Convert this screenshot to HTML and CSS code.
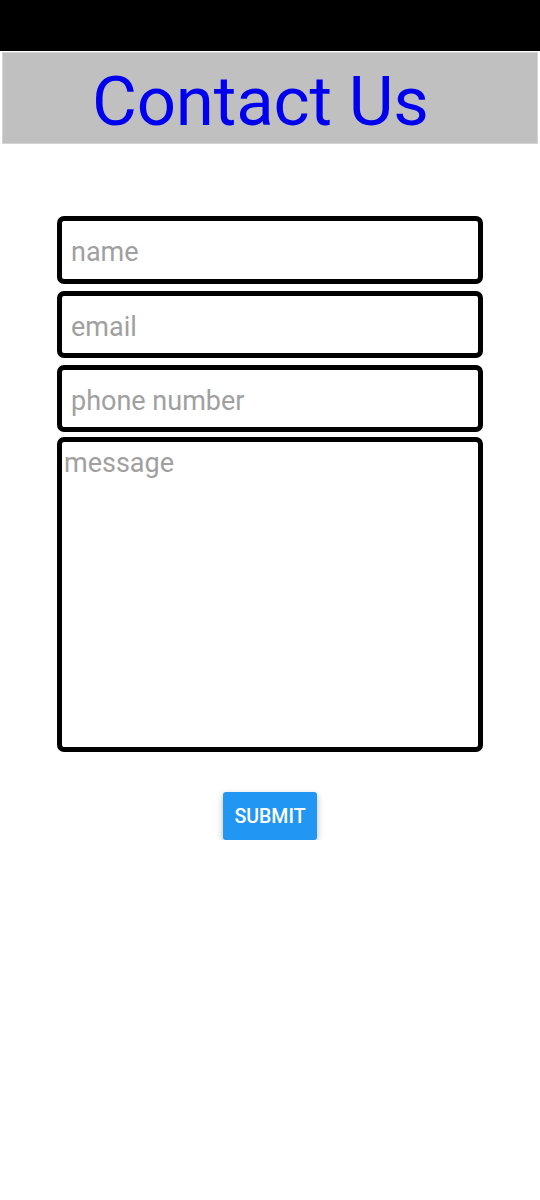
FILE: index.html
```html
<!DOCTYPE html>
<html>
<head>
<meta charset="utf-8">
<link rel="stylesheet" href="styles.css">
</head>
<body>
<div class="statusbar"></div>
<header class="header"><h1 class="title">Contact Us</h1></header>
<form class="form">
  <input class="field" type="text" placeholder="name">
  <input class="field" type="email" placeholder="email">
  <input class="field" type="tel" placeholder="phone number">
  <textarea class="field area" placeholder="message"></textarea>
  <button class="submit" type="button">SUBMIT</button>
</form>
</body>
</html>
```

FILE: styles.css
```css
html, body {
  margin: 0;
  padding: 0;
  background: #ffffff;
  font-family: Roboto, "Liberation Sans", sans-serif;
}
.statusbar {
  height: 51px;
  background: #000000;
}
.header {
  margin: 1px 2px 0 2px;
  height: 92px;
  background: #c0c0c0;
  border: 1px solid #d4d4d4;
  box-sizing: border-box;
  display: flex;
  align-items: center;
  padding-left: 89px;
  padding-top: 6px;
}
.title {
  margin: 0;
  font-weight: 400;
  font-size: 69px;
  line-height: 1;
  color: #0000ee;
  letter-spacing: -0.2px;
}
.form {
  display: flex;
  flex-direction: column;
  align-items: center;
  padding-top: 72px;
  gap: 7px;
}
.field {
  box-sizing: border-box;
  width: 426px;
  height: 67px;
  border: 5px solid #000000;
  border-radius: 7px;
  padding: 4px 9px 0;
  font-family: Roboto, "Liberation Sans", sans-serif;
  font-size: 27px;
  color: #333;
  background: #fff;
  outline: none;
  margin: 0;
}
.field:first-child {
  height: 68px;
}
.field::placeholder {
  color: #a0a0a0;
}
.area {
  height: 315px;
  margin-top: -2px;
  padding: 5px 2px;
  resize: none;
  line-height: 1.2;
}
.submit {
  margin-top: 33px;
  width: 94px;
  height: 48px;
  border: none;
  border-radius: 3px;
  background: #2196f3;
  color: #ffffff;
  font-family: Roboto, "Liberation Sans", sans-serif;
  font-size: 19.5px;
  font-weight: 500;
  box-shadow: 0 3px 7px rgba(0,0,0,0.28);
  padding: 0;
}
```
